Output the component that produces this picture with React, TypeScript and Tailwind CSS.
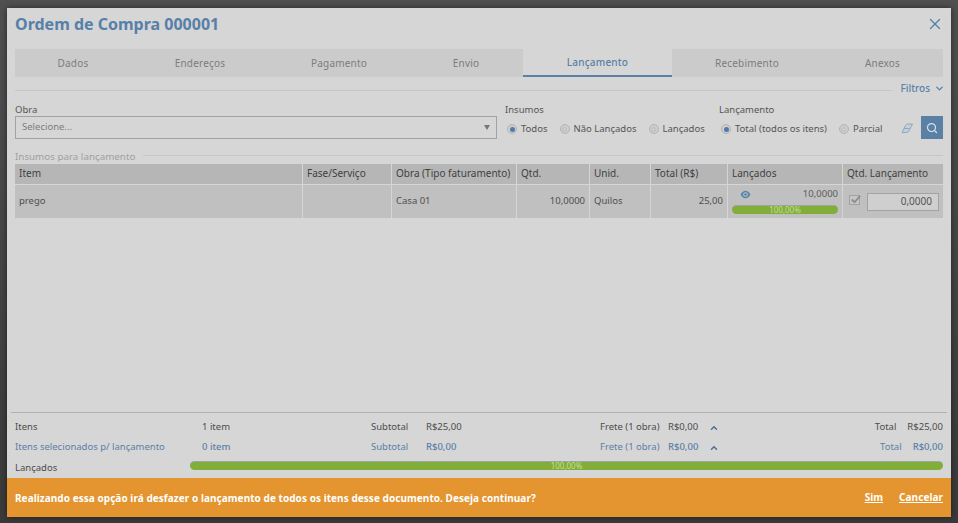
import { ChevronDown, ChevronUp, Search, X } from 'lucide-react'

const tabs = [
  { label: 'Dados', width: 'w-[116px]' },
  { label: 'Endereços', width: 'w-[138px]' },
  { label: 'Pagamento', width: 'w-[140px]' },
  { label: 'Envio', width: 'w-[114px]' },
  { label: 'Lançamento', width: 'w-[149px]', active: true },
  { label: 'Recebimento', width: 'w-[150px]' },
  { label: 'Anexos', width: 'w-[121px]' },
]

const headers = [
  'Item',
  'Fase/Serviço',
  'Obra (Tipo faturamento)',
  'Qtd.',
  'Unid.',
  'Total (R$)',
  'Lançados',
  'Qtd. Lançamento',
]

const gridCols =
  'grid grid-cols-[287px_88px_124px_72px_60px_76px_114px_100px] gap-x-px'

function Radio({ label, checked }: { label: string; checked?: boolean }) {
  return (
    <span className="flex items-center gap-[4px] text-[9.5px] leading-[12px] text-[#555]">
      <span className="flex h-[10px] w-[10px] items-center justify-center rounded-full border border-[#b4b4b4] bg-[#cdcdcd]">
        <span
          className={
            checked
              ? 'h-[5px] w-[5px] rounded-full bg-[#4f7bab]'
              : 'h-[5px] w-[5px] rounded-full border border-[#bdbdbd]'
          }
        />
      </span>
      {label}
    </span>
  )
}

function Progress() {
  return (
    <div className="flex h-[9px] items-center justify-center rounded-full border-t border-[#a3a3a3] bg-[#80ae38] text-[8px] text-[#c6dc9c]">
      <span className="leading-none">100,00%</span>
    </div>
  )
}

function TotalsRow({
  label,
  items,
  subtotal,
  total,
  blue,
}: {
  label: string
  items: string
  subtotal: string
  total: string
  blue?: boolean
}) {
  const value = blue ? 'font-medium' : ''
  return (
    <div
      className={`relative h-[20px] text-[9.5px] leading-[20px] ${
        blue ? 'text-[#5a80a6]' : 'text-[#4c4c4c]'
      }`}
    >
      <span className="absolute left-[8px]">{label}</span>
      <span className={`absolute left-[195px] ${value}`}>{items}</span>
      <span className="absolute left-[364px]">Subtotal</span>
      <span className={`absolute left-[419px] ${value}`}>{subtotal}</span>
      <span className="absolute left-[593px]">Frete (1 obra)</span>
      <span className={`absolute left-[661px] ${value}`}>R$0,00</span>
      <ChevronUp
        className="absolute left-[702px] top-[6px] h-[10px] w-[10px] text-[#49709a]"
        strokeWidth={3.5}
      />
      <span className="absolute right-[8px] flex gap-[11px]">
        <span>Total</span>
        <span className={value}>{total}</span>
      </span>
    </div>
  )
}

export default function App() {
  return (
    <div className="relative h-[523px] w-[958px] overflow-hidden bg-gradient-to-b from-[#505050] to-[#3a3a3a] font-['Open_Sans',sans-serif]">
      <div className="absolute left-[7px] top-[8px] flex h-[509px] w-[944px] flex-col bg-[#d6d6d6] shadow-[0_0_6px_rgba(0,0,0,0.5)]">
        <div className="flex h-[41px] items-start justify-between pl-[8px] pr-[7px] pt-[4px]">
          <h1 className="text-[16px] leading-[24px] font-bold text-[#5680a8]">
            Ordem de Compra 000001
          </h1>
          <X
            className="mt-[3px] h-[18px] w-[18px] text-[#5a80a6]"
            strokeWidth={1.8}
          />
        </div>

        <div className="mx-[8px] flex h-[28px] w-[928px] bg-[#cbcbcb]">
          {tabs.map(tab => (
            <div
              key={tab.label}
              className={`${tab.width} flex items-center justify-center text-[10px] tracking-[0.2px] ${
                tab.active
                  ? 'border-b-2 border-[#5a80a6] bg-[#d6d6d6] font-medium text-[#5a80a6]'
                  : 'text-[#7c7c7c]'
              }`}
            >
              {tab.label}
            </div>
          ))}
        </div>

        <div className="ml-[8px] mr-[6px] mt-[4px] flex h-[14px] items-center">
          <div className="mr-[8px] mt-[5px] h-px flex-1 bg-[#c6c6c6]" />
          <span className="flex items-center gap-[4px] text-[10px] font-medium text-[#5a80a6]">
            Filtros
            <ChevronDown className="h-[11px] w-[11px]" strokeWidth={3} />
          </span>
        </div>

        <div className="relative mx-[8px] mt-[1px] h-[53px] text-[9.5px] text-[#555]">
          <span className="absolute left-0 top-[7px]">Obra</span>
          <div className="absolute left-0 top-[20px] flex h-[23px] w-[482px] items-center justify-between border border-[#a2a2a2] px-[6px] text-[#7d7d7d]">
            <span>Selecione...</span>
            <span className="h-0 w-0 border-x-[3.5px] border-t-[5px] border-x-transparent border-t-[#777]" />
          </div>

          <span className="absolute left-[490px] top-[7px]">Insumos</span>
          <div className="absolute left-[492px] top-[27px] flex gap-[12px]">
            <Radio label="Todos" checked />
            <Radio label="Não Lançados" />
            <Radio label="Lançados" />
          </div>

          <span className="absolute left-[704px] top-[7px]">Lançamento</span>
          <div className="absolute left-[706px] top-[27px] flex gap-[12px]">
            <Radio label="Total (todos os itens)" checked />
            <Radio label="Parcial" />
          </div>

          <svg
            viewBox="0 0 12 12"
            className="absolute left-[886px] top-[26px] h-[12px] w-[12px]"
          >
            <path
              d="M1 10.5 4.5 3.5Q5.2 2 6.8 2H11.5L8 9Q7.2 10.5 5.8 10.5z"
              fill="#c6ced7"
              stroke="#8aa3bd"
              strokeWidth="0.9"
            />
            <path d="M3 6.5H8.5" stroke="#8aa3bd" strokeWidth="0.9" />
          </svg>
          <div className="absolute right-0 top-[20px] flex h-[23px] w-[22px] items-center justify-center bg-[#5a80a6]">
            <Search className="h-[12px] w-[12px] text-[#d6e0ea]" strokeWidth={2.5} />
          </div>
        </div>

        <div className="mx-[8px] mt-[1px] flex h-[14px] items-center gap-[8px]">
          <span className="text-[9.8px] text-[#a0a0a0]">
            Insumos para lançamento
          </span>
          <div className="mb-[4px] h-px flex-1 bg-[#c6c6c6]" />
        </div>

        <div className={`mx-[8px] ${gridCols} h-[20px] w-[928px]`}>
          {headers.map(header => (
            <div
              key={header}
              className="flex items-center bg-[#b6b6b6] pb-[1px] pl-[4px] text-[10px] whitespace-nowrap text-[#3f3f3f]"
            >
              {header}
            </div>
          ))}
        </div>

        <div
          className={`mx-[8px] mt-px ${gridCols} h-[33px] w-[928px] text-[9.5px] text-[#4f4f4f]`}
        >
          <div className="flex items-center bg-[#c0c0c0] pl-[4px]">prego</div>
          <div className="bg-[#c0c0c0]" />
          <div className="flex items-center bg-[#c0c0c0] pl-[4px]">Casa 01</div>
          <div className="flex items-center justify-end bg-[#c0c0c0] pr-[4px]">
            10,0000
          </div>
          <div className="flex items-center bg-[#c0c0c0] pl-[4px]">Quilos</div>
          <div className="flex items-center justify-end bg-[#c0c0c0] pr-[4px]">
            25,00
          </div>
          <div className="bg-[#c0c0c0] px-[4px] pt-[3px]">
            <div className="flex h-[13px] items-center justify-between pl-[8px]">
              <svg viewBox="0 0 12 10" className="h-[9px] w-[11px]">
                <path
                  d="M0.5 5C2 2 4 0.8 6 0.8S10 2 11.5 5C10 8 8 9.2 6 9.2S2 8 0.5 5z"
                  fill="#5a85b0"
                />
                <circle cx="6" cy="5" r="2.6" fill="#c0c0c0" />
                <circle cx="6" cy="5" r="1.5" fill="#5a85b0" />
              </svg>
              <span className="text-[#5c5c5c]">10,0000</span>
            </div>
            <div className="mt-[4px]">
              <Progress />
            </div>
          </div>
          <div className="flex items-center gap-[7px] bg-[#c0c0c0] pl-[6px]">
            <span className="relative mb-[3px] h-[10px] w-[11px] border border-[#a2a2a2] bg-[#c6c6c6]">
              <svg viewBox="0 0 12 12" className="absolute -top-[2px] left-0 h-[11px] w-[11px]">
                <path d="M2 6l3 3 6-7" fill="none" stroke="#8d8d8d" strokeWidth="2" />
              </svg>
            </span>
            <div className="flex h-[18px] w-[72px] items-center justify-end border border-[#a2a2a2] bg-[#cfcfcf] pr-[6px] text-[10px] text-[#555]">
              0,0000
            </div>
          </div>
        </div>

        <div className="flex-1" />

        <div className="mx-[4px] h-px bg-[#b0b0b0]" />
        <div className="pt-[4px]">
          <TotalsRow label="Itens" items="1 item" subtotal="R$25,00" total="R$25,00" />
          <TotalsRow
            label="Itens selecionados p/ lançamento"
            items="0 item"
            subtotal="R$0,00"
            total="R$0,00"
            blue
          />
          <div className="relative h-[21px] text-[9.5px] text-[#4c4c4c]">
            <span className="absolute left-[8px] top-[4px]">Lançados</span>
            <div className="absolute left-[183px] right-[8px] top-[4px]">
              <Progress />
            </div>
          </div>
        </div>

        <div className="flex h-[39px] items-center justify-between bg-[#e49530] px-[8px] text-[10px] font-bold tracking-[0.05px] text-white">
          <span className="mt-[1px]">
            Realizando essa opção irá desfazer o lançamento de todos os itens
            desse documento. Deseja continuar?
          </span>
          <span className="flex gap-[16px]">
            <span className="underline">Sim</span>
            <span className="underline">Cancelar</span>
          </span>
        </div>
      </div>
    </div>
  )
}
